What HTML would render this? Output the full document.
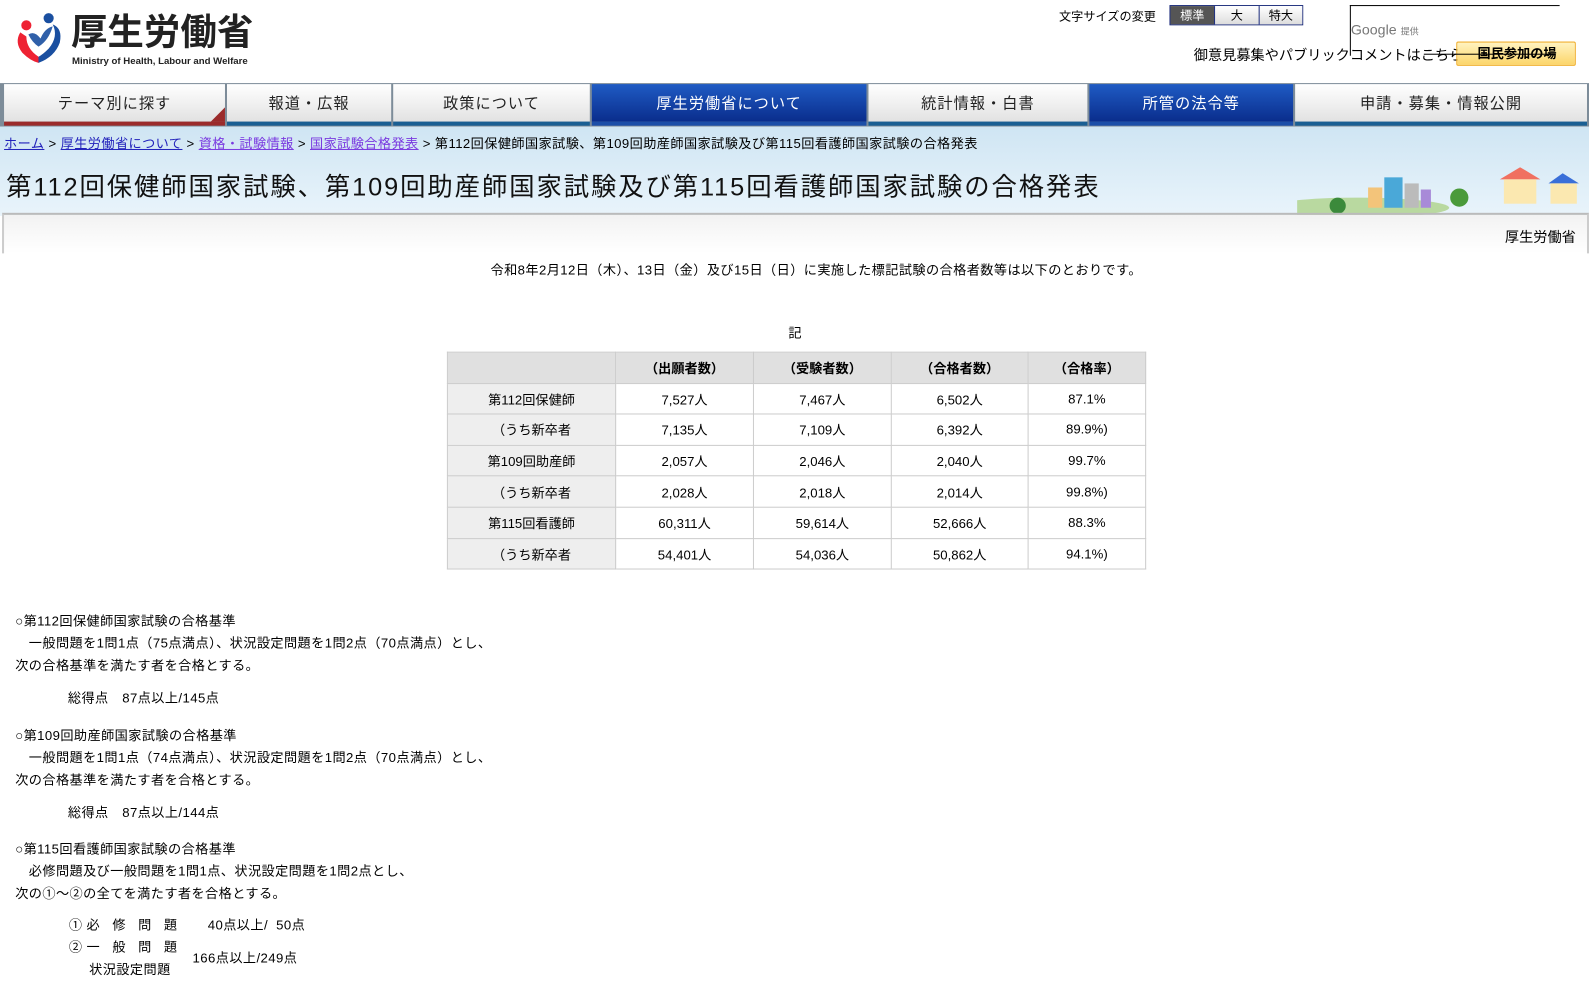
<!DOCTYPE html>
<html><head><meta charset="utf-8"><style>
*{margin:0;padding:0;box-sizing:border-box}
body{width:1589px;height:991px;overflow:hidden;background:#fff;font-family:"Liberation Sans","Noto Sans CJK JP",sans-serif;color:#000;position:relative;font-size:13px}
#w{position:absolute;left:0;top:0;width:1568px;height:980px;transform:scale(1.0134);transform-origin:0 0}
.abs{position:absolute}
.nav{position:absolute;top:82px;left:0;width:1568px;height:43px;background:#7d8c99}
.nav div{position:absolute;top:1px;height:41px;background:linear-gradient(#fff,#e2e2e2);border-bottom:4px solid #1a5f93;text-align:center;line-height:40px;font-size:15px;color:#222;letter-spacing:1px}
.nav div.b{background:linear-gradient(#1f5bc4,#0a2d8c);color:#fff;border-bottom-color:#1c4ea8}
.band{position:absolute;top:125px;left:0;width:1568px;height:88px;background:linear-gradient(#cfe5f3,#e9f4fb)}
table{border-collapse:collapse;position:absolute;left:441px;top:347px;width:690px}
td{border:1px solid #ccc;height:30.6px;text-align:center;font-size:13px}
tr td:first-child{background:#eee}
tr:first-child td{background:#e0e0e0;font-weight:bold}
a{color:#2222bb}
.t{letter-spacing:.4px}
</style></head><body><div id="w">
<svg class="abs" style="left:14px;top:12px" width="48" height="52" viewBox="0 0 48 52">
<circle cx="12" cy="13" r="5" fill="#e23"/><circle cx="34" cy="6" r="5" fill="#1a4fa0"/>
<path d="M6 20 Q0 30 8 40 Q16 48 24 50 L24 44 Q12 36 12 24 Z" fill="#e23"/>
<path d="M24 50 Q40 44 45 30 Q48 16 38 12 Q44 24 34 36 Q28 42 24 44 Z" fill="#1a4fa0"/>
<path d="M14 22 Q20 18 26 26 Q30 16 38 14 Q34 28 24 34 Q18 30 14 22Z" fill="#1a4fa0" opacity=".9"/>
</svg>
<div class="abs" style="left:70px;top:10px;font-size:36px;font-weight:bold;color:#222;line-height:44px">厚生労働省</div>
<div class="abs" style="left:71px;top:55px;font-size:9.5px;font-weight:bold;color:#222">Ministry of Health, Labour and Welfare</div>
<div class="abs" style="left:1045px;top:7px;font-size:12px">文字サイズの変更</div>
<div class="abs" style="left:1154px;top:5px;width:132px;height:20px;border:1px solid #1a2a7a;display:flex;font-size:12px">
<div style="width:43px;background:#555;color:#fff;text-align:center;line-height:18px">標準</div>
<div style="width:44px;background:linear-gradient(#fff,#ddd);text-align:center;line-height:18px;border-left:1px solid #1a2a7a">大</div>
<div style="flex:1;background:linear-gradient(#fff,#ddd);text-align:center;line-height:18px;border-left:1px solid #1a2a7a">特大</div></div>
<div class="abs" style="left:1332px;top:5px;width:207px;height:1px;background:#000"></div>
<div class="abs" style="left:1332px;top:5px;width:1px;height:50px;background:#000"></div>
<div class="abs" style="left:1333px;top:21px;font-size:14px;color:#777">Google <span style="font-size:9px">提供</span></div>
<div class="abs" style="left:1178px;top:44px;font-size:14px">御意見募集やパブリックコメントはこちら</div>
<div class="abs" style="left:1437px;top:41px;width:118px;height:24px;background:linear-gradient(#fff3c0,#fcd56a);border:1px solid #f0b030;border-radius:2px;font-size:13px;font-weight:bold;line-height:22px;padding-left:20px">国民参加の場</div>
<div class="abs" style="left:1405px;top:53px;width:130px;height:1px;background:#000"></div>
<div class="nav">
<div style="left:4px;width:218px;border-bottom-color:#9b2b2b">テーマ別に探す<span style="position:absolute;right:0;bottom:0;width:0;height:0;border-left:14px solid transparent;border-bottom:14px solid #9b2b2b"></span></div>
<div style="left:224px;width:162px">報道・広報</div>
<div style="left:388px;width:194px">政策について</div>
<div class="b" style="left:584px;width:271px">厚生労働省について</div>
<div style="left:857px;width:216px">統計情報・白書</div>
<div class="b" style="left:1075px;width:201px">所管の法令等</div>
<div style="left:1278px;width:288px">申請・募集・情報公開</div>
</div>
<div class="band"></div>
<svg class="abs" style="left:1280px;top:165px" width="288" height="48">
<ellipse cx="60" cy="40" rx="90" ry="10" fill="#b9d9a0"/><rect x="86" y="10" width="18" height="30" fill="#4aa8d8"/><rect x="70" y="20" width="14" height="20" fill="#f3c47a"/><rect x="106" y="16" width="14" height="24" fill="#bbb"/><rect x="122" y="22" width="10" height="18" fill="#a88ad8"/>
<circle cx="40" cy="38" r="8" fill="#3b8a3b"/><circle cx="160" cy="30" r="9" fill="#4a9a3a"/>
<polygon points="200,12 220,0 240,12" fill="#f07060"/><rect x="204" y="12" width="32" height="24" fill="#fbe8b0"/>
<polygon points="248,16 262,6 278,16" fill="#3a6fd8"/><rect x="250" y="16" width="26" height="20" fill="#fbe8b0"/>
</svg>
<div class="abs" style="left:4px;top:131px;font-size:13px;letter-spacing:.4px;white-space:nowrap"><a href="#">ホーム</a> &gt; <a href="#">厚生労働省について</a> &gt; <a href="#" style="color:#7a3ae0">資格・試験情報</a> &gt; <a href="#" style="color:#7a3ae0">国家試験合格発表</a> &gt; 第112回保健師国家試験、第109回助産師国家試験及び第115回看護師国家試験の合格発表</div>
<div class="abs" style="left:6px;top:165px;font-size:25px;letter-spacing:1.9px;color:#111;white-space:nowrap">第112回保健師国家試験、第109回助産師国家試験及び第115回看護師国家試験の合格発表</div>
<div class="abs" style="left:2px;top:210px;width:1566px;height:40px;border-top:2px solid #bbb;border-left:2px solid #ccc;border-right:2px solid #ccc;background:linear-gradient(#f2f2f2,#fff)"></div>
<div class="abs" style="left:1485px;top:224px;font-size:14px">厚生労働省</div>
<div class="abs t" style="left:484px;top:256px;white-space:nowrap">令和8年2月12日（木）、13日（金）及び15日（日）に実施した標記試験の合格者数等は以下のとおりです。</div>
<div class="abs" style="left:778px;top:318px">記</div>
<table>
<tr><td style="width:166px"></td><td style="width:136px">（出願者数）</td><td style="width:136px">（受験者数）</td><td style="width:135px">（合格者数）</td><td>（合格率）</td></tr>
<tr><td>第112回保健師</td><td>7,527人</td><td>7,467人</td><td>6,502人</td><td>87.1%</td></tr>
<tr><td>（うち新卒者</td><td>7,135人</td><td>7,109人</td><td>6,392人</td><td>89.9%)</td></tr>
<tr><td>第109回助産師</td><td>2,057人</td><td>2,046人</td><td>2,040人</td><td>99.7%</td></tr>
<tr><td>（うち新卒者</td><td>2,028人</td><td>2,018人</td><td>2,014人</td><td>99.8%)</td></tr>
<tr><td>第115回看護師</td><td>60,311人</td><td>59,614人</td><td>52,666人</td><td>88.3%</td></tr>
<tr><td>（うち新卒者</td><td>54,401人</td><td>54,036人</td><td>50,862人</td><td>94.1%)</td></tr>
</table>
<div class="abs t" style="left:15px;top:602px;line-height:22px">○第112回保健師国家試験の合格基準<br>　一般問題を1問1点（75点満点）、状況設定問題を1問2点（70点満点）とし、<br>次の合格基準を満たす者を合格とする。</div>
<div class="abs t" style="left:67px;top:678px">総得点　87点以上/145点</div>
<div class="abs t" style="left:15px;top:715px;line-height:22px">○第109回助産師国家試験の合格基準<br>　一般問題を1問1点（74点満点）、状況設定問題を1問2点（70点満点）とし、<br>次の合格基準を満たす者を合格とする。</div>
<div class="abs t" style="left:67px;top:791px">総得点　87点以上/144点</div>
<div class="abs t" style="left:15px;top:827px;line-height:22px">○第115回看護師国家試験の合格基準<br>　必修問題及び一般問題を1問1点、状況設定問題を1問2点とし、<br>次の①～②の全てを満たす者を合格とする。</div>
<div class="abs t" style="left:68px;top:902px">①&nbsp;必&nbsp;&nbsp;&nbsp;修&nbsp;&nbsp;&nbsp;問&nbsp;&nbsp;&nbsp;題</div>
<div class="abs t" style="left:205px;top:902px">40点以上/&nbsp;&nbsp;50点</div>
<div class="abs t" style="left:68px;top:924px">②&nbsp;一&nbsp;&nbsp;&nbsp;般&nbsp;&nbsp;&nbsp;問&nbsp;&nbsp;&nbsp;題</div>
<div class="abs t" style="left:88px;top:946px">状況設定問題</div>
<div class="abs t" style="left:190px;top:935px">166点以上/249点</div>
</div></body></html>
